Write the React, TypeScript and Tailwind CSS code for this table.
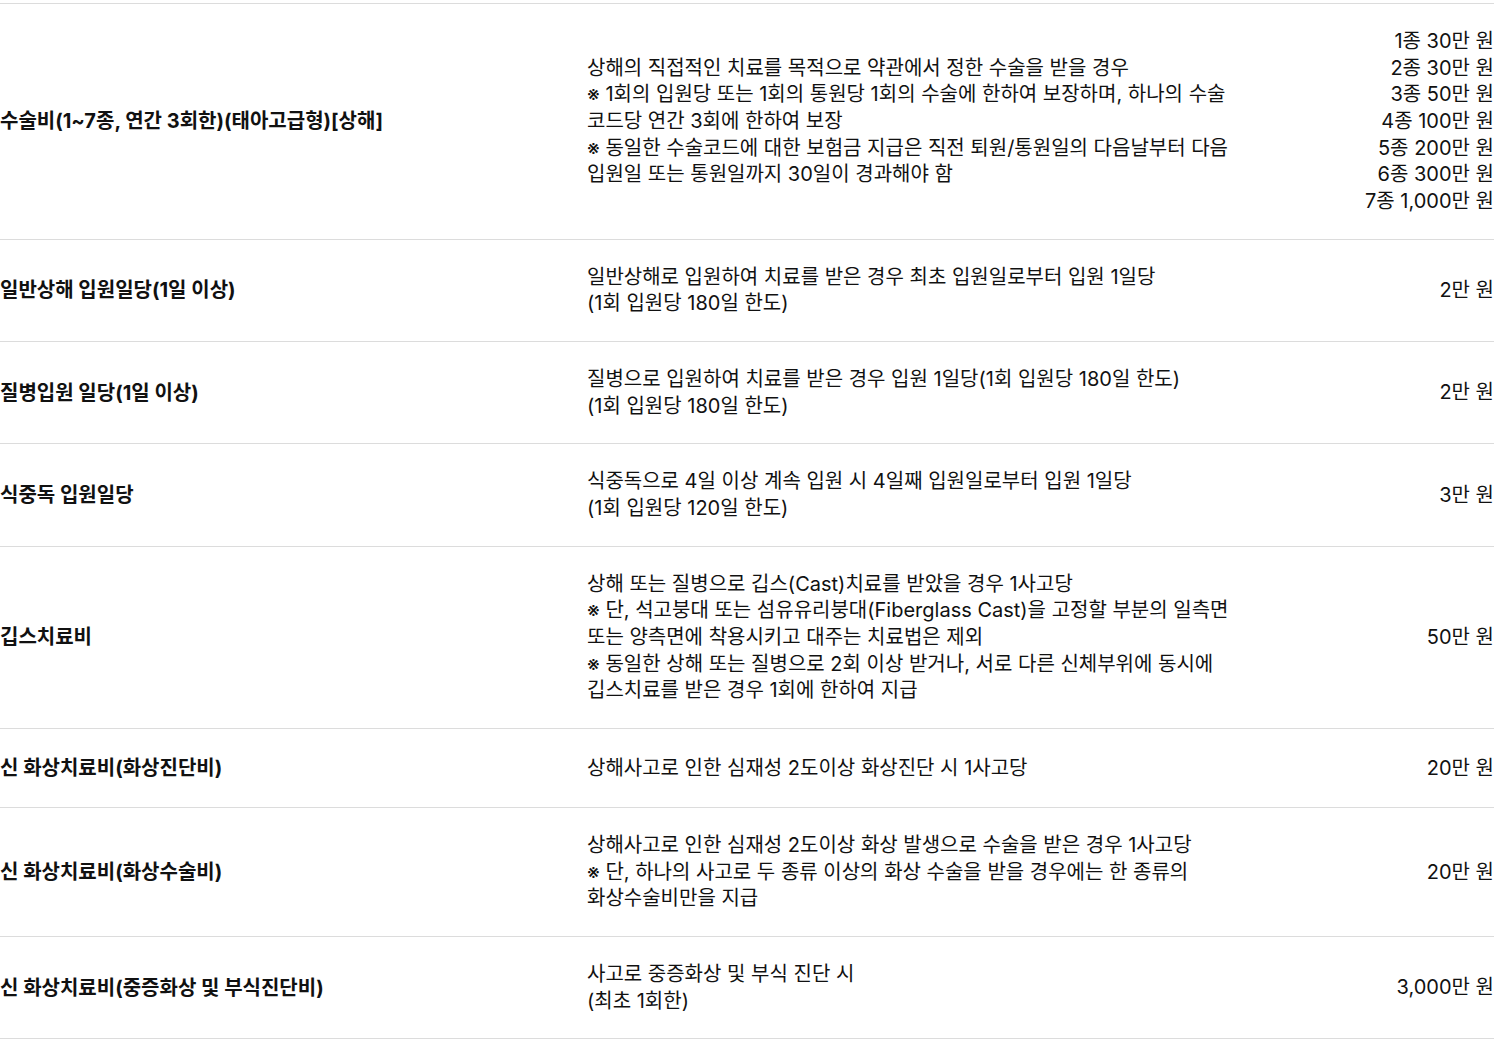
const rows = [
  {
    label: "수술비(1~7종, 연간 3회한)(태아고급형)[상해]",
    desc: [
      "상해의 직접적인 치료를 목적으로 약관에서 정한 수술을 받을 경우",
      "※ 1회의 입원당 또는 1회의 통원당 1회의 수술에 한하여 보장하며, 하나의 수술",
      "코드당 연간 3회에 한하여 보장",
      "※ 동일한 수술코드에 대한 보험금 지급은 직전 퇴원/통원일의 다음날부터 다음",
      "입원일 또는 통원일까지 30일이 경과해야 함",
    ],
    amount: [
      "1종 30만 원",
      "2종 30만 원",
      "3종 50만 원",
      "4종 100만 원",
      "5종 200만 원",
      "6종 300만 원",
      "7종 1,000만 원",
    ],
  },
  {
    label: "일반상해 입원일당(1일 이상)",
    desc: ["일반상해로 입원하여 치료를 받은 경우 최초 입원일로부터 입원 1일당", "(1회 입원당 180일 한도)"],
    amount: ["2만 원"],
  },
  {
    label: "질병입원 일당(1일 이상)",
    desc: ["질병으로 입원하여 치료를 받은 경우 입원 1일당(1회 입원당 180일 한도)", "(1회 입원당 180일 한도)"],
    amount: ["2만 원"],
  },
  {
    label: "식중독 입원일당",
    desc: ["식중독으로 4일 이상 계속 입원 시 4일째 입원일로부터 입원 1일당", "(1회 입원당 120일 한도)"],
    amount: ["3만 원"],
  },
  {
    label: "깁스치료비",
    desc: [
      "상해 또는 질병으로 깁스(Cast)치료를 받았을 경우 1사고당",
      "※ 단, 석고붕대 또는 섬유유리붕대(Fiberglass Cast)을 고정할 부분의 일측면",
      "또는 양측면에 착용시키고 대주는 치료법은 제외",
      "※ 동일한 상해 또는 질병으로 2회 이상 받거나, 서로 다른 신체부위에 동시에",
      "깁스치료를 받은 경우 1회에 한하여 지급",
    ],
    amount: ["50만 원"],
  },
  {
    label: "신 화상치료비(화상진단비)",
    desc: ["상해사고로 인한 심재성 2도이상 화상진단 시 1사고당"],
    amount: ["20만 원"],
  },
  {
    label: "신 화상치료비(화상수술비)",
    desc: [
      "상해사고로 인한 심재성 2도이상 화상 발생으로 수술을 받은 경우 1사고당",
      "※ 단, 하나의 사고로 두 종류 이상의 화상 수술을 받을 경우에는 한 종류의",
      "화상수술비만을 지급",
    ],
    amount: ["20만 원"],
  },
  {
    label: "신 화상치료비(중증화상 및 부식진단비)",
    desc: ["사고로 중증화상 및 부식 진단 시", "(최초 1회한)"],
    amount: ["3,000만 원"],
  },
];

export default function App() {
  return (
    <div
      className="bg-white text-[#111] w-[1494px] pt-[3px]"
      style={{ fontFamily: 'Inter, "Noto Sans CJK KR", sans-serif' }}
    >
      <div className="border-t border-[#dcdcdc]">
        {rows.map((row) => (
          <div
            key={row.label}
            className="grid grid-cols-[587px_1fr_auto] items-center border-b border-[#dcdcdc] py-6"
          >
            <div className="text-[20px] leading-[30px] font-bold">{row.label}</div>
            <div className="text-[20px] leading-[26.67px]">
              {row.desc.map((line) => (
                <div key={line} className="whitespace-nowrap">
                  {line}
                </div>
              ))}
            </div>
            <div className="text-[20px] leading-[26.67px] text-right">
              {row.amount.map((a) => (
                <div key={a} className="whitespace-nowrap">
                  {a}
                </div>
              ))}
            </div>
          </div>
        ))}
      </div>
    </div>
  );
}
